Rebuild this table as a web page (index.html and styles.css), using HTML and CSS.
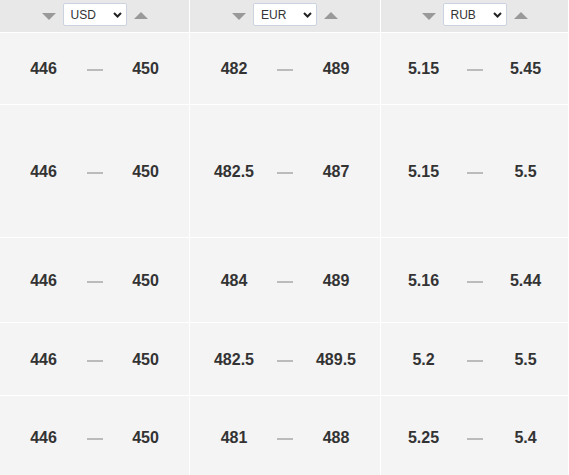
FILE: index.html
```html
<!DOCTYPE html>
<html>
<head>
<meta charset="utf-8">
<link rel="stylesheet" href="styles.css">
</head>
<body>
<div class="table">
  <div class="head">
    <span class="tri tri-down"></span>
    <div class="sel"><select><option>USD</option></select><svg class="chev" width="9" height="6" viewBox="0 0 9 6"><path d="M1 1 L4.5 4.5 L8 1" fill="none" stroke="#222" stroke-width="2"/></svg></div>
    <span class="tri tri-up"></span>
  </div>
  <div class="head">
    <span class="tri tri-down"></span>
    <div class="sel"><select><option>EUR</option></select><svg class="chev" width="9" height="6" viewBox="0 0 9 6"><path d="M1 1 L4.5 4.5 L8 1" fill="none" stroke="#222" stroke-width="2"/></svg></div>
    <span class="tri tri-up"></span>
  </div>
  <div class="head">
    <span class="tri tri-down"></span>
    <div class="sel"><select><option>RUB</option></select><svg class="chev" width="9" height="6" viewBox="0 0 9 6"><path d="M1 1 L4.5 4.5 L8 1" fill="none" stroke="#222" stroke-width="2"/></svg></div>
    <span class="tri tri-up"></span>
  </div>

  <div class="cell"><span class="v">446</span><span class="dash"></span><span class="v">450</span></div>
  <div class="cell"><span class="v">482</span><span class="dash"></span><span class="v">489</span></div>
  <div class="cell"><span class="v">5.15</span><span class="dash"></span><span class="v">5.45</span></div>

  <div class="cell"><span class="v">446</span><span class="dash"></span><span class="v">450</span></div>
  <div class="cell"><span class="v">482.5</span><span class="dash"></span><span class="v">487</span></div>
  <div class="cell"><span class="v">5.15</span><span class="dash"></span><span class="v">5.5</span></div>

  <div class="cell"><span class="v">446</span><span class="dash"></span><span class="v">450</span></div>
  <div class="cell"><span class="v">484</span><span class="dash"></span><span class="v">489</span></div>
  <div class="cell"><span class="v">5.16</span><span class="dash"></span><span class="v">5.44</span></div>

  <div class="cell"><span class="v">446</span><span class="dash"></span><span class="v">450</span></div>
  <div class="cell"><span class="v">482.5</span><span class="dash"></span><span class="v">489.5</span></div>
  <div class="cell"><span class="v">5.2</span><span class="dash"></span><span class="v">5.5</span></div>

  <div class="cell"><span class="v">446</span><span class="dash"></span><span class="v">450</span></div>
  <div class="cell"><span class="v">481</span><span class="dash"></span><span class="v">488</span></div>
  <div class="cell"><span class="v">5.25</span><span class="dash"></span><span class="v">5.4</span></div>
</div>
</body>
</html>
```
FILE: styles.css
```css
html, body {
  margin: 0;
  padding: 0;
  background: #fff;
}
body {
  font-family: "Liberation Sans", Arial, sans-serif;
  overflow: hidden;
}
.table {
  display: grid;
  grid-template-columns: 189px 190px 187px;
  grid-template-rows: 32px 71px 132px 84px 72px 82px;
  gap: 1px;
  padding-right: 1px;
  background: #fff;
  width: 569px;
  box-sizing: border-box;
}
.head {
  background: #e8e8e8;
  display: flex;
  align-items: center;
  justify-content: center;
  gap: 7px;
}
.tri {
  width: 0;
  height: 0;
  border-left: 7.5px solid transparent;
  border-right: 7.5px solid transparent;
}
.tri-down {
  border-top: 7px solid #999;
  margin-top: 1px;
}
.tri-up {
  border-bottom: 7px solid #999;
  margin-top: -1px;
}
.sel {
  position: relative;
  width: 64px;
  height: 23px;
  margin-top: -3px;
}
.sel select {
  appearance: none;
  -webkit-appearance: none;
  width: 64px;
  height: 23px;
  box-sizing: border-box;
  border: 1px solid #ccd3e0;
  border-radius: 2px;
  background: #fff;
  font-family: "Liberation Sans", Arial, sans-serif;
  font-size: 12px;
  color: #333;
  padding: 0 0 0 7px;
  margin: 0;
  outline: none;
}
.chev {
  position: absolute;
  left: 50px;
  top: 9px;
  pointer-events: none;
}
.cell {
  background: #f4f4f4;
  display: grid;
  grid-template-columns: 70px 32px 70px;
  justify-content: center;
  align-items: center;
  justify-items: center;
}
.v {
  font-size: 16px;
  font-weight: bold;
  color: #333;
  margin-top: 1px;
}
.dash {
  width: 16px;
  height: 2px;
  background: #bbb;
  margin-top: 3px;
}
```
